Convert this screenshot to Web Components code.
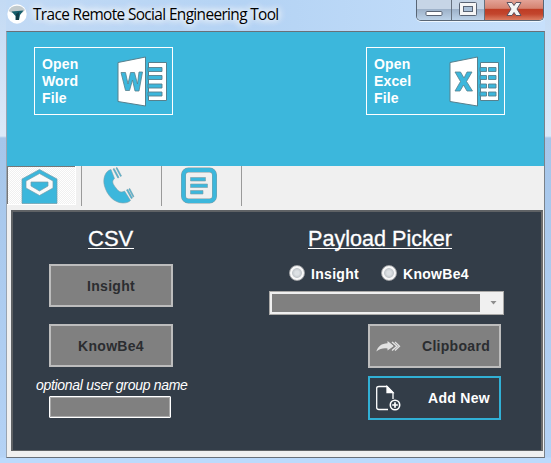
<!DOCTYPE html>
<html lang="en">
<head>
<meta charset="utf-8">
<title>Trace Remote Social Engineering Tool</title>
<style>
html,body{margin:0;height:100%;overflow:hidden}
body{font-family:"Liberation Sans",Arial,sans-serif}
</style>
</head>
<body>
<tool-window></tool-window>

<template id="t-window">
<style>
:host{display:grid;grid-template-rows:31px 427px;box-sizing:border-box;width:551px;height:463px;padding:0 6px 5px;
 background:linear-gradient(#c3daf4 0,#dce9f8 136px,#a6c6ea 138px,#b4d2f5 457px,#bcdafc 458px)}
.client{box-sizing:border-box;border:1px solid #6a7078;border-left-color:#98a4b2;border-right-color:#7a828a;background:#f0f0f0;display:grid;grid-template-rows:134px 44px 241px 1fr}
.head{background:#3cb7dc;display:flex;justify-content:space-between;align-items:flex-start;padding:15px 39px 0 27px}
.panel{margin:0 1px 0 4px;box-sizing:border-box;border:2px solid #5f6265;border-right-color:#6c6c6c;border-bottom-width:1px;background:#333d48;display:grid;grid-template-columns:243px 1fr}
.left{display:flex;flex-direction:column;align-items:flex-start;padding-left:36px}
.right{display:flex;flex-direction:column;align-items:flex-start;padding-left:13px}
h2{margin:0;font-weight:400;color:#fff;font-size:21.6px;line-height:26px;height:22px;white-space:nowrap;border-bottom:1px solid #fff;margin-top:14px;-webkit-text-stroke:.3px #fff}
.left h2{margin-left:39px;width:46px;font-size:22px}
.right h2{margin-left:39px;width:144px}
.left action-button{margin-top:15px;width:124px;height:43px}
.left action-button+action-button{margin-top:17px}
.hint{font-size:14px;font-style:italic;color:#fff;line-height:16px;margin:10px 0 0 -13px;white-space:nowrap;letter-spacing:-.3px}
.field{box-sizing:border-box;width:122px;height:22px;border:1px solid #fff;background:#808080;border-radius:1px;margin-top:3px;box-shadow:inset 0 0 0 1px #aaa}
.radios{display:flex;height:18px;margin:16px 0 0 20px}
radio-option:first-child{width:92px}
drop-list{margin-top:8px}
.right action-button{width:133px;height:44px;margin:9px 0 0 99px}
.right action-button+action-button{margin-top:8px}
svg{display:block;flex:none}
</style>
<window-title>Trace Remote Social Engineering Tool</window-title>
<div class="client">
 <div class="head"><office-button kind="word">Open<br>Word<br>File</office-button><office-button kind="excel">Open<br>Excel<br>File</office-button></div>
 <tab-strip></tab-strip>
 <div class="panel">
  <div class="left">
   <h2>CSV</h2>
   <action-button>Insight</action-button>
   <action-button>KnowBe4</action-button>
   <div class="hint">optional user group name</div>
   <div class="field"></div>
  </div>
  <div class="right">
   <h2>Payload Picker</h2>
   <div class="radios"><radio-option>Insight</radio-option><radio-option>KnowBe4</radio-option></div>
   <drop-list></drop-list>
   <action-button icon>
    <svg slot="icon" width="26" height="18" viewBox="0 0 26 18"><path fill="#e2e2e2" d="M.3 14.500C2 9.500 5.500 6.500 11.500 6.300V4L18 9L11.500 13.500V11.500C7.500 11 4 11.500 .3 14.500Z"/><path d="M16 5L21 9.200L16 13.500" fill="none" stroke="#e2e2e2" stroke-width="1.500"/><path d="M14 5L18.500 9.200L14 13.500" fill="none" stroke="#808080" stroke-width="1"/><path d="M19 5L23.500 9.200L19 13.500" fill="none" stroke="#e2e2e2" stroke-width="1.300"/></svg>
    Clipboard</action-button>
   <action-button icon accent>
    <svg slot="icon" width="26" height="26" viewBox="0 0 26 26" fill="none" stroke="#fff" stroke-width="1.300"><path d="M12 24.500H3Q.7 24.500 .7 22.500V3Q.7 1.500 3 1.500H11L17 7.500V14"/><path d="M11 1.500V7.500H17Z" fill="#fff"/><circle cx="19" cy="20" r="4.700" stroke-width="1.600"/><path stroke-width="1.700" d="M19 17.200V22.800M16.200 20H21.800"/></svg>
    Add New</action-button>
  </div>
 </div>
</div>
</template>

<template id="t-title">
<style>
:host{display:flex;height:31px;color:#000;background:linear-gradient(90deg,#c2daf5,#b4d3f4 45%,#c7e0fb)}
svg{display:block}
.logo{margin:4px 6px 0 1px}
span{font:15.4px/22px "Open Sans","Noto Sans",sans-serif;margin-top:4px;white-space:nowrap;flex:1;letter-spacing:-.63px;text-shadow:0 0 7px #fff,0 0 8px #fff,0 0 10px #fff}
.caps{display:flex;box-sizing:border-box;width:128px;height:21px;border:1px solid #596675;border-top:0;border-radius:0 0 5px 5px;overflow:hidden;box-shadow:0 1px 0 #eef7ff;margin-right:1px}
.caps div{box-sizing:border-box;width:35px;border-right:1px solid #66717e;background:linear-gradient(#c6d5e6 0 45%,#9db1c8 46%,#bcd2e8);display:flex;justify-content:center}
.caps div:nth-child(2){width:33px}
.caps div:last-child{width:58px;border:0;background:linear-gradient(#e3a296,#d58270 42%,#bf3c24 45%,#c2452d 70%,#dc7d62)}
</style>
<svg class="logo" width="20" height="20" viewBox="0 0 20 20"><circle cx="10" cy="10" r="9.700" fill="#fff"/><path d="M1.500 7A9 8 0 0 1 18 6L15 9H5Z" fill="#c3cbcd"/><path d="M4.500 7.500L16.500 6.500L13 11L12 16H8.500V12Z" fill="#155e6b"/><path d="M9 10L12 8V16H9Z" fill="#123d48"/></svg>
<span><slot></slot></span>
<div class="caps">
 <div><svg width="18" height="20"><rect x="1" y="11.500" width="16" height="4" rx="1" fill="#fff" stroke="#596373"/></svg></div>
 <div><svg width="18" height="20"><rect x=".5" y="2.500" width="17" height="13" rx="1" fill="#f5f5f5" stroke="#596373"/><rect x="4.500" y="6.500" width="9" height="5" fill="#a9bfd6" stroke="#596373"/></svg></div>
 <div><svg width="16" height="20"><path d="M1 2.500H6L8 5.500L10 2.500H15L11 9L15 15.500H10L8 12.500L6 15.500H1L5 9Z" fill="#f4f4f4" stroke="#5d5360"/></svg></div>
</div>
</template>

<template id="t-office">
<style>
:host{display:flex;box-sizing:border-box;width:139px;height:68px;border:1px solid #fff;color:#fff;font-weight:700;font-size:14px;line-height:17px;letter-spacing:.15px;padding:8px 0 0 7px;justify-content:space-between}
:host([kind=excel]) .w,:host([kind=word]) .x{display:none}
svg{display:block;margin:0 3px 0 0}
</style>
<div><slot></slot></div>
<svg width="52" height="52" viewBox="0 0 52 52">
 <path d="M31.500 6.500H49.500V44.500H31.500Z" fill="#fff" stroke="#57808d"/>
 <path d="M30 5V46" stroke="#3cb7dc" stroke-width="2"/>
 <path d="M1 6.500L28.500 1V50L1 45.500Z" fill="#fff" stroke="#57808d"/>
 <g class="w"><path d="M31 11.500h14v4h-14zM31 19.500h14v4h-14zM31 28h14v4h-14zM31 36h14v4h-14z" fill="#3cb7dc" stroke="#57808d" stroke-width=".9"/>
 <path d="M4 16.500H8.500L11 28L13.500 16.500H17.500L20.500 28L22 16H25.500L22 35H18L15.500 24L12.500 34.500H8.500Z" fill="#3cb7dc" stroke="#57808d" stroke-width=".8"/></g>
 <g class="x"><path d="M31 11.500h6.500v4h-6.500zM39.500 11.500h7.500v4h-7.500zM31 19.500h6.500v4h-6.500zM39.500 19.500h7.500v4h-7.500zM31 28h6.500v4h-6.500zM39.500 28h7.500v4h-7.500zM31 36h6.500v4h-6.500zM39.500 36h7.500v4h-7.500z" fill="#3cb7dc" stroke="#57808d" stroke-width=".9"/>
 <path d="M6 16H11.500L15 22L18 16H23L17.500 25.500L23.500 35H18L14.500 29L11 35H6L11.500 25.500Z" fill="#3cb7dc" stroke="#57808d" stroke-width=".8"/></g>
</svg>
</template>

<template id="t-tabs">
<style>
:host{display:flex;background:#f0f0f0;height:44px}
div{box-sizing:border-box;width:80px;height:40px;border-right:1px solid #9a9a9a}
.on{width:69px;height:39px;border:solid #fff;border-width:0 1px 1px 0;box-shadow:inset 1px 1px #777;background:repeating-conic-gradient(#fff 0 25%,#f0f0f0 0 50%) 0 0/2px 2px}
.sep{width:6px}
svg{display:block}
</style>
<div class="on"><svg width="68" height="38"><path d="M15 13L32.500 3.500L50 13V37.500H15Z" fill="#3cb7dc" stroke="#729ca9" stroke-width=".7"/><path d="M19 15L32.500 7.500L46 15V22L32.500 29.500L19 22Z" fill="#fafafa" stroke="#729ca9" stroke-width=".7"/><path d="M24 16H41V20L32.500 25L24 20Z" fill="#3cb7dc" stroke="#729ca9" stroke-width=".7"/></svg></div>
<div class="sep"></div>
<div><svg width="79" height="40"><g fill="#3cb7dc" stroke="#7ba0ab" stroke-width=".6"><path d="M29 3.500C23 5 20.500 13 22.500 20C25 29 32 37 41 37C45 37 47 36 48.500 34.500L42.500 25C39 27 37 26 34 22C30 17 30 15 32.500 12.500Z"/><path d="M31 3L32.200 2.500L37 11.500L35.800 12Z"/><path d="M34 2L35 1.500L39.500 10L38.500 10.500Z"/><path d="M44.500 24L45.700 23.300L50.500 32L49.300 32.700Z"/><path d="M46.800 23L47.800 22.500L52 30.500L51 31Z"/></g></svg></div>
<div><svg width="79" height="40"><rect x="21.500" y="4" width="31" height="31" rx="5" fill="none" stroke="#819ba2" stroke-width="5"/><rect x="21.500" y="4" width="31" height="31" rx="5" fill="none" stroke="#3cb7dc" stroke-width="4"/><g fill="#3cb7dc" stroke="#819ba2" stroke-width=".6"><path d="M28.500 11.500H43.500V15H28.500ZM28.500 18H45.500V21.500H28.500ZM28.500 24.500H41V28H28.500Z"/></g></svg></div>
</template>

<template id="t-action">
<style>
:host{display:flex;box-sizing:border-box;border:2px solid #bdbdbd;background:#808080;color:#2b2d30;font-weight:700;font-size:14px;letter-spacing:.3px;align-items:center;justify-content:center;white-space:nowrap}
:host([icon]){justify-content:space-between;padding:0 9px 0 6px}
:host([accent]){border-color:#31b0d5;background:#333d48;color:#fff}
</style>
<slot name="icon"></slot><span><slot></slot></span>
</template>

<template id="t-radio">
<style>
:host{display:flex;color:#fff;font-weight:700;font-size:14px;line-height:18px;letter-spacing:.3px;white-space:nowrap}
i{box-sizing:border-box;width:16px;height:16px;border-radius:50%;border:1px solid #a2a4a7;background:radial-gradient(circle,#dde1e4 0 2px,#c3c8cc 4.500px,#f8f8f8 5.300px);margin-right:6px}
</style>
<i></i><span><slot></slot></span>
</template>

<template id="t-drop">
<style>
:host{display:flex;box-sizing:border-box;width:235px;height:24px;border:1px solid #aaa9a7;background:#f0f0f0;padding:2px;justify-content:space-between;align-items:center}
div{width:208px;height:18px;background:#808080}
svg{display:block;margin-right:4px}
</style>
<div></div><svg width="7" height="4"><path d="M.5 0H6.500L3.500 3.500Z" fill="#8d8d8d"/></svg>
</template>

<script>
for (const [tag, id] of [
  ['window-title', 't-title'], ['office-button', 't-office'], ['tab-strip', 't-tabs'],
  ['action-button', 't-action'], ['radio-option', 't-radio'], ['drop-list', 't-drop'],
  ['tool-window', 't-window']
]) {
  customElements.define(tag, class extends HTMLElement {
    constructor() {
      super();
      this.attachShadow({mode: 'open'}).append(document.getElementById(id).content.cloneNode(true));
    }
  });
}
</script>
</body>
</html>
